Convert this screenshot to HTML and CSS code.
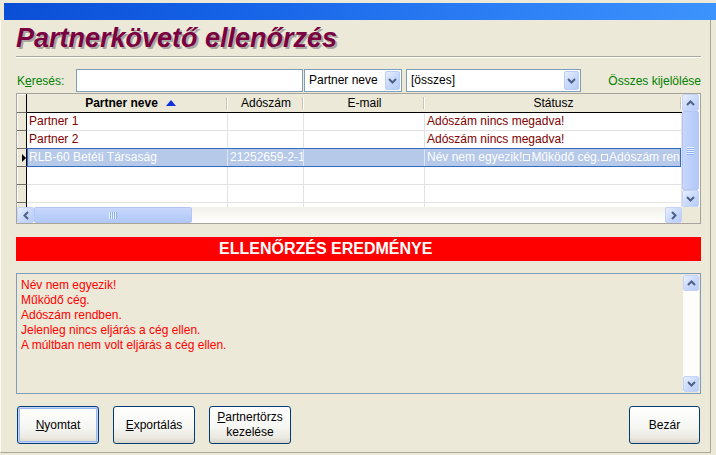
FILE: index.html
```html
<!DOCTYPE html>
<html lang="hu">
<head>
<meta charset="utf-8">
<title>Partnerkövető ellenőrzés</title>
<link rel="stylesheet" href="styles.css">
</head>
<body>
<div class="window">
  <div class="titlebar"></div>
  <div class="client">
    <h1 class="title">Partnerkövető ellenőrzés</h1>
    <div class="sep"></div>

    <div class="search">
      <span class="search-label">K<u>e</u>resés:</span>
      <div class="textbox"></div>
      <div class="combo combo-field">
        <span class="combo-text">Partner neve</span>
        <span class="combo-btn"><svg width="9" height="6" viewBox="0 0 9 6"><path d="M1 1 L4.5 4.5 L8 1" stroke="#4d6185" stroke-width="2" fill="none"/></svg></span>
      </div>
      <div class="combo combo-filter">
        <span class="combo-text">[összes]</span>
        <span class="combo-btn"><svg width="9" height="6" viewBox="0 0 9 6"><path d="M1 1 L4.5 4.5 L8 1" stroke="#4d6185" stroke-width="2" fill="none"/></svg></span>
      </div>
      <span class="select-all">Összes kijelölése</span>
    </div>

    <div class="grid">
      <div class="grid-body">
        <div class="hrow">
          <div class="hcell c-sel"></div>
          <div class="hcell c-name sep-r"><b>Partner neve</b><span class="sort-up"></span></div>
          <div class="hcell c-tax sep-r">Adószám</div>
          <div class="hcell c-mail sep-r">E-mail</div>
          <div class="hcell c-stat sep-r">Státusz</div>
        </div>
        <div class="row">
          <div class="cell c-sel"></div>
          <div class="cell c-name">Partner 1</div>
          <div class="cell c-tax"></div>
          <div class="cell c-mail"></div>
          <div class="cell c-stat">Adószám nincs megadva!</div>
        </div>
        <div class="row">
          <div class="cell c-sel"></div>
          <div class="cell c-name">Partner 2</div>
          <div class="cell c-tax"></div>
          <div class="cell c-mail"></div>
          <div class="cell c-stat">Adószám nincs megadva!</div>
        </div>
        <div class="row selected">
          <div class="cell c-sel"><span class="cur"></span></div>
          <div class="cell c-name">RLB-60 Betéti Társaság</div>
          <div class="cell c-tax">21252659-2-13</div>
          <div class="cell c-mail"></div>
          <div class="cell c-stat">Név nem egyezik!<span class="crlf"></span>Működő cég.<span class="crlf"></span>Adószám rendben.</div>
        </div>
        <div class="row">
          <div class="cell c-sel"></div>
          <div class="cell c-name"></div>
          <div class="cell c-tax"></div>
          <div class="cell c-mail"></div>
          <div class="cell c-stat"></div>
        </div>
        <div class="row">
          <div class="cell c-sel"></div>
          <div class="cell c-name"></div>
          <div class="cell c-tax"></div>
          <div class="cell c-mail"></div>
          <div class="cell c-stat"></div>
        </div>
        <div class="row">
          <div class="cell c-sel"></div>
          <div class="cell c-name"></div>
          <div class="cell c-tax"></div>
          <div class="cell c-mail"></div>
          <div class="cell c-stat"></div>
        </div>
      </div>

      <div class="vscroll">
        <div class="sb-btn sb-v"><svg width="9" height="6" viewBox="0 0 9 6"><path d="M1 5 L4.5 1.5 L8 5" stroke="#4d6185" stroke-width="2" fill="none"/></svg></div>
        <div class="sb-thumb vthumb"><svg width="7" height="8" viewBox="0 0 7 8"><path d="M0 0.5 H7 M0 2.5 H7 M0 4.5 H7 M0 6.5 H7" stroke="#eef4fe"/><path d="M0 1.5 H7 M0 3.5 H7 M0 5.5 H7 M0 7.5 H7" stroke="#8cb0f8"/></svg></div>
        <div class="sb-fill"></div>
        <div class="sb-btn sb-v"><svg width="9" height="6" viewBox="0 0 9 6"><path d="M1 1 L4.5 4.5 L8 1" stroke="#4d6185" stroke-width="2" fill="none"/></svg></div>
      </div>

      <div class="hscroll">
        <div class="sb-btn sb-h"><svg width="6" height="9" viewBox="0 0 6 9"><path d="M5 1 L1.5 4.5 L5 8" stroke="#4d6185" stroke-width="2" fill="none"/></svg></div>
        <div class="sb-thumb hthumb"><svg width="8" height="7" viewBox="0 0 8 7"><path d="M0.5 0 V7 M2.5 0 V7 M4.5 0 V7 M6.5 0 V7" stroke="#eef4fe"/><path d="M1.5 0 V7 M3.5 0 V7 M5.5 0 V7 M7.5 0 V7" stroke="#8cb0f8"/></svg></div>
        <div class="sb-fill"></div>
        <div class="sb-btn sb-h"><svg width="6" height="9" viewBox="0 0 6 9"><path d="M1 1 L4.5 4.5 L1 8" stroke="#4d6185" stroke-width="2" fill="none"/></svg></div>
      </div>
      <div class="corner"></div>
    </div>

    <div class="result-head">ELLENŐRZÉS EREDMÉNYE</div>

    <div class="result">
      <div class="result-text">
        <div>Név nem egyezik!</div>
        <div>Működő cég.</div>
        <div>Adószám rendben.</div>
        <div>Jelenleg nincs eljárás a cég ellen.</div>
        <div>A múltban nem volt eljárás a cég ellen.</div>
      </div>
      <div class="rscroll">
        <div class="sb-btn sb-r"><svg width="9" height="6" viewBox="0 0 9 6"><path d="M1 5 L4.5 1.5 L8 5" stroke="#4d6185" stroke-width="2" fill="none"/></svg></div>
        <div class="sb-fill"></div>
        <div class="sb-btn sb-r"><svg width="9" height="6" viewBox="0 0 9 6"><path d="M1 1 L4.5 4.5 L8 1" stroke="#4d6185" stroke-width="2" fill="none"/></svg></div>
      </div>
    </div>

    <div class="buttons">
      <button class="btn btn-default"><u>N</u>yomtat</button>
      <button class="btn"><u>E</u>xportálás</button>
      <button class="btn btn-two"><u>P</u>artnertörzs<br>kezelése</button>
      <button class="btn btn-close">Bezár</button>
    </div>
  </div>
</div>
</body>
</html>
```

FILE: styles.css
```css
* { box-sizing: border-box; }

html, body {
  margin: 0;
  padding: 0;
}

body {
  width: 716px;
  height: 455px;
  overflow: hidden;
  background: #ece9d8;
  font-family: "Liberation Sans", Arial, sans-serif;
  font-size: 12px;
  color: #000;
}

.window {
  width: 716px;
  height: 455px;
  padding-top: 3px;
  background: #ece9d8;
  display: flex;
  flex-direction: column;
}

.titlebar {
  height: 17px;
  margin-left: 4px;
  flex: none;
  background: linear-gradient(to right, #0a4ed6 0%, #1461e6 30%, #2a7bf3 65%, #3d93fd 100%);
}

.client {
  width: 711px;
  height: 433px;
  flex: none;
  background: #ece9d8;
  border-left: 1px solid #fbfaf6;
  border-right: 1px solid #aca899;
  border-bottom: 1px solid #aca899;
  padding: 3px 9px 0 15px;
  display: flex;
  flex-direction: column;
}

.title {
  margin: 0;
  height: 31px;
  line-height: 31px;
  font-size: 27px;
  font-weight: bold;
  font-style: italic;
  color: #7a0041;
  text-shadow: 2px 2px 0 #a9a7a0;
  white-space: nowrap;
}

.sep {
  height: 2px;
  margin-top: 2px;
  border-top: 1px solid #aca899;
  border-bottom: 1px solid #fff;
}

/* search row */
.search {
  display: flex;
  align-items: center;
  height: 23px;
  margin-top: 11px;
}

.search-label {
  width: 60px;
  padding-left: 1px;
  color: #008000;
}

.textbox {
  width: 227px;
  height: 23px;
  border: 1px solid #7f9db9;
  background: #fff;
}

.combo {
  display: flex;
  height: 23px;
  padding: 1px;
  border: 1px solid #7f9db9;
  background: #fff;
}

.combo-field { width: 98px; margin-left: 1px; }
.combo-filter { width: 175px; margin-left: 4px; }

.combo-text {
  flex: 1;
  padding-left: 3px;
  line-height: 19px;
  white-space: nowrap;
  overflow: hidden;
}

.combo-btn {
  width: 15px;
  height: 19px;
  display: flex;
  align-items: center;
  justify-content: center;
  border: 1px solid #bacdf6;
  border-radius: 2px;
  background: linear-gradient(135deg, #e6eefd 0%, #c9d9fb 50%, #b6cbf7 100%);
}

.select-all {
  margin-left: auto;
  color: #008000;
}

/* grid */
.grid {
  margin-top: 1px;
  height: 131px;
  border: 1px solid #a6a49c;
  display: grid;
  grid-template-columns: 665px 18px;
  grid-template-rows: 113px 16px;
  background: #fff;
}

.grid-body {
  overflow: hidden;
  background: #fff;
}

.hrow, .row {
  display: flex;
}

.hrow { height: 19px; }
.row { height: 18px; }

.c-sel { width: 10px; }
.c-name { width: 201px; }
.c-tax { width: 76px; }
.c-mail { width: 121px; }
.c-stat { width: 257px; }

.hcell {
  height: 19px;
  line-height: 18px;
  text-align: center;
  background-color: #ece9d8;
  border-bottom: 1px solid #000;
  white-space: nowrap;
  overflow: hidden;
}

.hcell.c-sel {
  border-right: 1px solid #000;
  border-bottom-color: #6f6d66;
  box-shadow: inset 1px 1px 0 #fff;
}

.sep-r {
  background-image: linear-gradient(to right, #c7c5b2 0, #c7c5b2 1px, #fff 1px, #fff 2px);
  background-repeat: no-repeat;
  background-size: 2px 12px;
  background-position: right 0 top 3px;
}

.hcell.c-name { padding-left: 6px; }

.sort-up {
  display: inline-block;
  width: 0;
  height: 0;
  margin-left: 8px;
  border-left: 5px solid transparent;
  border-right: 5px solid transparent;
  border-bottom: 6px solid #1030e0;
  vertical-align: 1px;
}

.cell {
  height: 18px;
  line-height: 17px;
  padding-left: 2px;
  border-right: 1px solid #e2e2e2;
  border-bottom: 1px solid #e2e2e2;
  color: #800000;
  white-space: nowrap;
  overflow: hidden;
}

.cell.c-sel {
  padding: 0;
  background: #ece9d8;
  border-right: 1px solid #000;
  border-bottom: 1px solid #6f6d66;
  box-shadow: inset 1px 0 0 #fff;
  display: flex;
  align-items: center;
  justify-content: flex-end;
}

.cur {
  width: 0;
  height: 0;
  border-left: 4px solid #000;
  border-top: 4px solid transparent;
  border-bottom: 4px solid transparent;
}

.row.selected {
  position: relative;
}

.row.selected .cell:not(.c-sel) {
  background: #b6c9e9;
  color: #fdfeff;
  border-right-color: #dce5f4;
}

.row.selected::after {
  content: "";
  position: absolute;
  left: 10px;
  right: 1px;
  top: -1px;
  bottom: 0;
  border: 1px solid #316ac5;
  pointer-events: none;
}

.crlf {
  display: inline-block;
  width: 7px;
  height: 7px;
  margin: 0 1px;
  border: 1px solid #fdfeff;
  vertical-align: 0;
}

/* scrollbars */
.vscroll {
  display: flex;
  flex-direction: column;
  padding-right: 1px;
  background: linear-gradient(to right, #f3f1ea, #fefefd);
}

.hscroll {
  display: flex;
  background: linear-gradient(#f3f1ea, #fefefd);
}

.corner {
  background: #ece9d8;
}

.sb-btn {
  display: flex;
  align-items: center;
  justify-content: center;
  border: 1px solid #c3d3f9;
  border-radius: 2px;
  background: linear-gradient(135deg, #e8effe 0%, #cbdafc 50%, #b8ccf8 100%);
  flex: none;
}

.sb-v { height: 17px; }
.sb-h { width: 17px; }
.sb-r { height: 16px; }

.sb-thumb {
  display: flex;
  align-items: center;
  justify-content: center;
  border: 1px solid #b4c7f4;
  border-radius: 2px;
  flex: none;
}

.vthumb {
  height: 79px;
  background: linear-gradient(to right, #c8d8fc, #bccffa 50%, #b2c8f6);
}

.hthumb {
  width: 158px;
  background: linear-gradient(#c8d8fc, #bccffa 50%, #b2c8f6);
}

.sb-fill { flex: 1; }

/* result */
.result-head {
  margin-top: 13px;
  height: 24px;
  line-height: 24px;
  padding-left: 203px;
  background: #ff0000;
  color: #fff;
  font-size: 16px;
  font-weight: bold;
  white-space: nowrap;
}

.result {
  margin-top: 12px;
  height: 121px;
  display: flex;
  border: 1px solid #7f9db9;
  background: #ece9d8;
}

.result-text {
  flex: 1;
  padding: 4px 4px;
  line-height: 15px;
  color: #ff0000;
}

.rscroll {
  width: 16px;
  margin: 1px 1px 1px 0;
  display: flex;
  flex-direction: column;
  background: #fdfdfb;
}

/* buttons */
.buttons {
  display: flex;
  gap: 14px;
  margin-top: 12px;
  padding-left: 1px;
  padding-right: 1px;
}

.btn {
  width: 82px;
  height: 38px;
  padding: 0;
  border: 1px solid #003c74;
  border-radius: 3px;
  background: linear-gradient(#ffffff 0%, #f6f6f3 55%, #ebe9e1 85%, #d8d3c8 100%);
  font-family: "Liberation Sans", Arial, sans-serif;
  font-size: 12px;
  line-height: 15px;
  color: #000;
  text-align: center;
}

.btn-default {
  box-shadow: inset 0 0 0 1px #c2d6fb, inset 0 0 0 2px #9ab8f0;
}

.btn-close {
  width: 71px;
  margin-left: auto;
}
```
